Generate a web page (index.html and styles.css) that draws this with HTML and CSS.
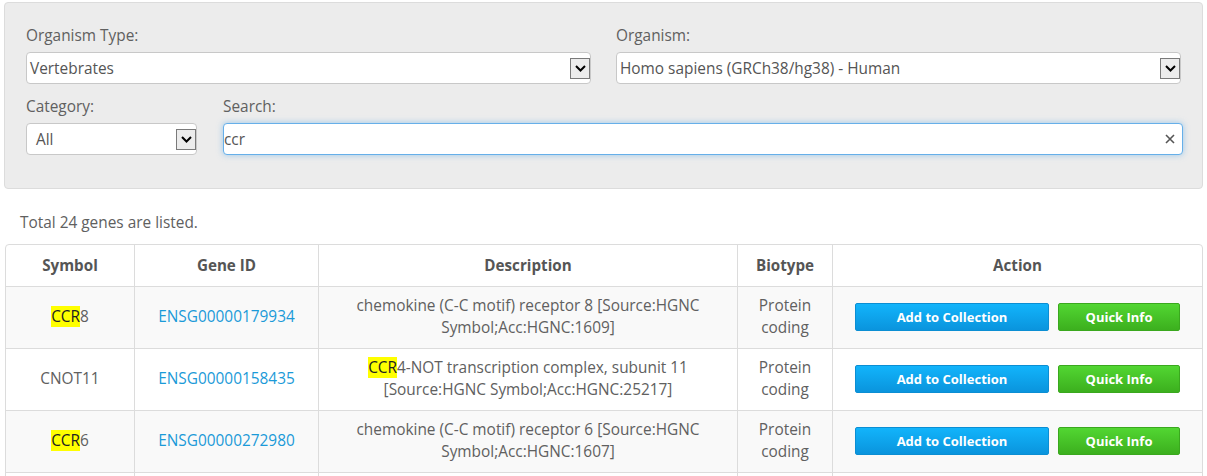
FILE: index.html
```html
<!DOCTYPE html>
<html>
<head>
<meta charset="utf-8">
<link rel="stylesheet" href="styles.css">
</head>
<body>
<div class="panel">
  <div class="row row-top">
    <div class="field">
      <div class="label">Organism Type:</div>
      <div class="select"><span class="val pad3">Vertebrates</span><span class="arrow"><svg width="11" height="7" viewBox="0 0 11 7"><path d="M1 1 L5.5 5.5 L10 1" fill="none" stroke="#000" stroke-width="2"/></svg></span></div>
    </div>
    <div class="field">
      <div class="label">Organism:</div>
      <div class="select"><span class="val pad3">Homo sapiens (GRCh38/hg38) - Human</span><span class="arrow"><svg width="11" height="7" viewBox="0 0 11 7"><path d="M1 1 L5.5 5.5 L10 1" fill="none" stroke="#000" stroke-width="2"/></svg></span></div>
    </div>
  </div>
  <div class="row row-bottom">
    <div class="field">
      <div class="label">Category:</div>
      <div class="select"><span class="val pad9">All</span><span class="arrow"><svg width="11" height="7" viewBox="0 0 11 7"><path d="M1 1 L5.5 5.5 L10 1" fill="none" stroke="#000" stroke-width="2"/></svg></span></div>
    </div>
    <div class="field">
      <div class="label">Search:</div>
      <div class="search"><span class="val">ccr</span><span class="clear"><svg width="10" height="10" viewBox="0 0 10 10"><path d="M1 1 L9 9 M9 1 L1 9" stroke="#555" stroke-width="1.6"/></svg></span></div>
    </div>
  </div>
</div>

<p class="total">Total 24 genes are listed.</p>

<div class="table-wrap">
<table class="genes">
  <colgroup>
    <col style="width:128px"><col style="width:184px"><col style="width:419px"><col style="width:95px"><col>
  </colgroup>
  <thead>
    <tr><th>Symbol</th><th>Gene ID</th><th>Description</th><th>Biotype</th><th>Action</th></tr>
  </thead>
  <tbody>
    <tr class="odd">
      <td><mark>CCR</mark>8</td>
      <td><a href="#">ENSG00000179934</a></td>
      <td>chemokine (C-C motif) receptor 8 [Source:HGNC<br>Symbol;Acc:HGNC:1609]</td>
      <td>Protein<br>coding</td>
      <td><div class="actions"><button class="btn btn-blue">Add to Collection</button><button class="btn btn-green">Quick Info</button></div></td>
    </tr>
    <tr>
      <td>CNOT11</td>
      <td><a href="#">ENSG00000158435</a></td>
      <td><mark>CCR</mark>4-NOT transcription complex, subunit 11<br>[Source:HGNC Symbol;Acc:HGNC:25217]</td>
      <td>Protein<br>coding</td>
      <td><div class="actions"><button class="btn btn-blue">Add to Collection</button><button class="btn btn-green">Quick Info</button></div></td>
    </tr>
    <tr class="odd">
      <td><mark>CCR</mark>6</td>
      <td><a href="#">ENSG00000272980</a></td>
      <td>chemokine (C-C motif) receptor 6 [Source:HGNC<br>Symbol;Acc:HGNC:1607]</td>
      <td>Protein<br>coding</td>
      <td><div class="actions"><button class="btn btn-blue">Add to Collection</button><button class="btn btn-green">Quick Info</button></div></td>
    </tr>
    <tr>
      <td>&nbsp;</td><td></td><td>&nbsp;<br>&nbsp;</td><td></td><td></td>
    </tr>
  </tbody>
</table>
</div>
</body>
</html>
```

FILE: styles.css
```css
* { box-sizing: border-box; }
html, body { margin: 0; padding: 0; background: #fff; }
body {
  font-family: "Open Sans", "Liberation Sans", sans-serif;
  font-size: 15.4px;
  line-height: 20px;
  color: #606060;
  overflow: hidden;
}
.panel {
  margin: 2px 4px 0 4px;
  background: #ececec;
  border: 1px solid #dcdcdc;
  border-radius: 4px;
  padding: 23px 20px 33px 21px;
}
.row { display: grid; }
.row-top { grid-template-columns: 565px 565px; column-gap: 25px; }
.row-bottom { grid-template-columns: 171px 960px; column-gap: 26px; margin-top: 13px; }
.label { height: 20px; margin-bottom: 6px; }
.select, .search {
  height: 32px;
  background: #fff;
  border: 1px solid #c8c8c8;
  border-radius: 4px;
  display: flex;
  align-items: center;
  justify-content: space-between;
  color: #555;
}
.val { white-space: nowrap; padding-top: 1px; }
.pad3 { padding-left: 3px; }
.pad9 { padding-left: 9px; }
.arrow {
  width: 20px;
  height: 21px;
  margin-right: 0;
  border: 1px solid #7a7a7a;
  background: #ececec;
  display: flex;
  align-items: center;
  justify-content: center;
}
.search {
  border-color: #66afe9;
  box-shadow: 0 0 6px rgba(102, 175, 233, 0.6);
  padding-left: 0;
}
.search .val { padding-left: 0; }
.clear { width: 10px; height: 10px; margin-right: 7px; display: flex; }
.total { margin: 24px 0 0 20px; height: 20px; }
.table-wrap { margin: 11px 4px 0 5px; }
.genes {
  width: 100%;
  table-layout: fixed;
  border-collapse: separate;
  border-spacing: 0;
  border: 1px solid #dcdcdc;
  border-radius: 4px;
}
.genes th, .genes td {
  text-align: center;
  vertical-align: middle;
  border-left: 1px solid #dcdcdc;
  border-top: 1px solid #dcdcdc;
  line-height: 22px;
}
.genes th:first-child, .genes td:first-child { border-left: none; }
.genes thead th { border-top: none; padding: 9px 8px 10px; font-weight: 700; color: #555; font-size: 15.2px; }
.genes td { padding: 8px 8px 9px; }
.genes tr.odd td { background: #f9f9f9; }
.genes a { color: #1b9ad8; text-decoration: none; }
mark { background: #ffff00; color: #222; }
.actions { display: flex; justify-content: center; gap: 9px; }
.btn {
  height: 28px;
  border-radius: 2px;
  font-family: "Open Sans", "Liberation Sans", sans-serif;
  font-size: 13px;
  font-weight: 700;
  color: #fff;
  padding: 0;
  cursor: pointer;
}
.btn-blue {
  width: 194px;
  background: linear-gradient(#12b4fb, #0a94dd);
  border: 1px solid #0b8ed3;
}
.btn-green {
  width: 122px;
  background: linear-gradient(#52d632, #3caf1e);
  border: 1px solid #3aa81e;
}
```
